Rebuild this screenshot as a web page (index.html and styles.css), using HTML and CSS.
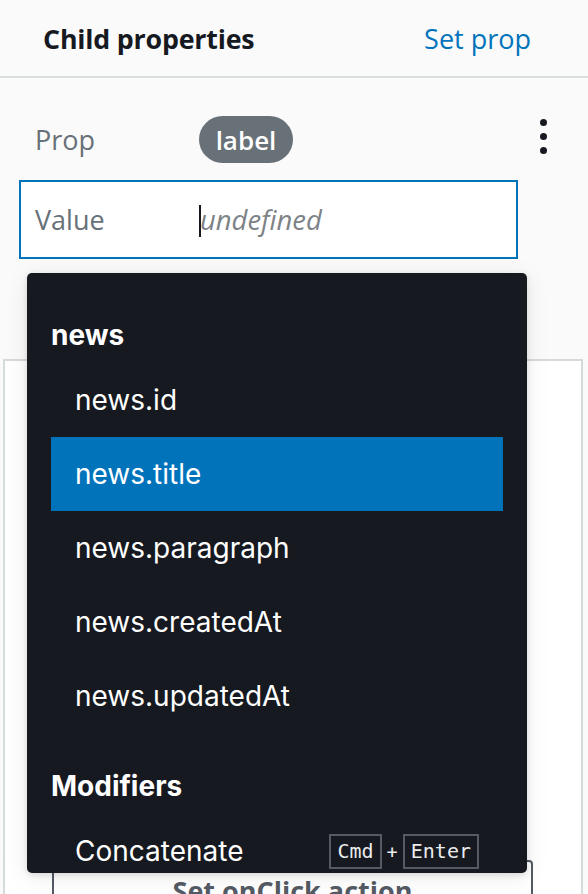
FILE: index.html
```html
<!DOCTYPE html>
<html>
<head>
<meta charset="utf-8">
<link rel="stylesheet" href="styles.css">
</head>
<body>
<div class="panel">
  <header class="panel-header">
    <h2 class="title">Child properties</h2>
    <a class="link">Set prop</a>
  </header>
  <div class="prop-row">
    <span class="field-label">Prop</span>
    <span class="badge">label</span>
    <span class="kebab"><i></i><i></i><i></i></span>
  </div>
  <div class="value-wrap">
    <div class="value-field">
      <span class="field-label value-label">Value</span>
      <span class="caret"></span><span class="placeholder">undefined</span>
    </div>
    <div class="dropdown">
      <div class="group">
        <div class="group-title">news</div>
        <div class="item">news.id</div>
        <div class="item active">news.title</div>
        <div class="item">news.paragraph</div>
        <div class="item">news.createdAt</div>
        <div class="item">news.updatedAt</div>
      </div>
      <div class="group">
        <div class="group-title">Modifiers</div>
        <div class="item with-keys">
          <span>Concatenate</span>
          <span class="keys"><kbd>Cmd</kbd><span class="plus">+</span><kbd>Enter</kbd></span>
        </div>
      </div>
    </div>
  </div>
  <div class="card">
    <div class="card-body"></div>
    <button class="action-btn">Set onClick action</button>
  </div>
</div>
</body>
</html>
```

FILE: styles.css
```css
html, body {
  margin: 0;
  padding: 0;
  background: #fafafa;
  font-family: "Open Sans", "Noto Sans", sans-serif;
  overflow: hidden;
}
.panel {
  width: 588px;
  height: 894px;
  overflow: hidden;
}
.panel-header {
  height: 76px;
  border-bottom: 2px solid #d9dede;
  display: flex;
  align-items: center;
  justify-content: space-between;
  padding: 0 57px 0 43px;
  box-sizing: content-box;
}
.title {
  margin: 0;
  font-size: 26.8px;
  font-weight: 700;
  color: #16191f;
  letter-spacing: -0.2px;
}
.link {
  font-size: 27px;
  color: #0073bb;
}
.prop-row {
  display: flex;
  align-items: center;
  height: 47px;
  margin-top: 38px;
  padding-left: 35px;
}
.field-label {
  font-size: 27px;
  color: #687078;
  width: 164px;
  flex: none;
}
.badge {
  background: #687078;
  color: #fff;
  font-size: 26px;
  font-weight: 600;
  height: 47px;
  width: 94px;
  border-radius: 24px;
  display: flex;
  align-items: center;
  justify-content: center;
}
.kebab {
  margin-left: auto;
  margin-right: 41px;
  display: flex;
  flex-direction: column;
  gap: 7px;
  align-self: flex-start;
  margin-top: 3px;
}
.kebab i {
  width: 7px;
  height: 7px;
  border-radius: 50%;
  background: #16191f;
  display: block;
}
.value-wrap {
  position: relative;
  margin: 17px 70px 0 19px;
}
.value-field {
  height: 79px;
  box-sizing: border-box;
  border: 2px solid #0073bb;
  background: #fff;
  display: flex;
  align-items: center;
  padding-left: 14px;
}
.caret {
  width: 2px;
  height: 32px;
  background: #16191f;
  margin-top: 2px;
}
.placeholder {
  font-style: italic;
  font-size: 27.4px;
  color: #7d8286;
  margin-left: -1px;
}
.dropdown {
  position: absolute;
  left: 8px;
  top: 93px;
  width: 500px;
  height: 600px;
  box-sizing: border-box;
  background: #16191f;
  border-radius: 5px;
  box-shadow: 0 2px 6px rgba(0,0,0,0.12), 0 4px 24px rgba(0,0,0,0.08);
  padding: 25px 24px 0 24px;
  overflow: hidden;
  z-index: 2;
  font-family: Inter, "Noto Sans", sans-serif;
  color: #fff;
}
.group + .group {
  margin-top: 16px;
}
.group-title {
  font-weight: 700;
  font-size: 28px;
  line-height: 34px;
  padding: 20px 0 11px 0;
}
.item {
  height: 74px;
  display: flex;
  align-items: center;
  padding: 0 24px;
  font-size: 28px;
}
.item.active {
  background: #0073bb;
}
.with-keys {
  justify-content: space-between;
}
.keys {
  display: flex;
  align-items: center;
  gap: 4px;
}
kbd {
  font-family: "DejaVu Sans Mono", monospace;
  font-size: 20px;
  color: #e9ebed;
  border: 2px solid #545b64;
  height: 35px;
  box-sizing: border-box;
  padding: 0 6px;
  display: flex;
  align-items: center;
}
.plus {
  font-size: 20px;
  color: #e9ebed;
}
.card {
  margin: 100px 5px 0 3px;
  border: 2px solid #d5dbdb;
  background: #fff;
  padding: 0 48px 0 47px;
}
.card-body {
  height: 499px;
}
.action-btn {
  display: block;
  width: 100%;
  height: 60px;
  border: 2px solid #545b64;
  border-radius: 4px;
  background: #fff;
  font-family: "Open Sans", sans-serif;
  font-size: 27px;
  font-weight: 700;
  color: #545b64;
  padding: 0;
}
```
